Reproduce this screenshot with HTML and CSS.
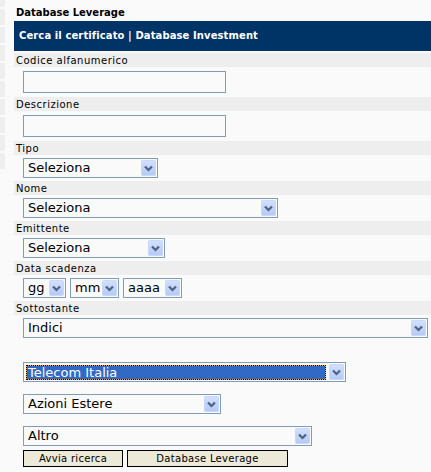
FILE: index.html
```html
<!DOCTYPE html>
<html lang="it">
<head>
  <meta charset="UTF-8">
  <title>Database Leverage</title>
  <link rel="stylesheet" href="styles.css">
</head>
<body>
  <div id="page">
    <div class="edge">
      <span class="first"></span><span></span><span></span><span></span><span></span>
      <span></span><span></span><span></span><span></span><span></span>
    </div>

    <div id="main">
      <h1 id="title">Database Leverage</h1>
      <div id="header">Cerca il certificato | Database Investment</div>

      <div class="label">Codice alfanumerico</div>
      <div class="field"><input class="text" type="text"></div>

      <div class="label">Descrizione</div>
      <div class="field"><input class="text" type="text"></div>

      <div class="label">Tipo</div>
      <div class="field sel">
        <span class="select w-tipo"><select><option>Seleziona</option></select><span class="arrow"><svg width="15" height="16"><use href="#arr"/></svg></span></span>
      </div>

      <div class="label">Nome</div>
      <div class="field sel">
        <span class="select w-nome"><select><option>Seleziona</option></select><span class="arrow"><svg width="15" height="16"><use href="#arr"/></svg></span></span>
      </div>

      <div class="label">Emittente</div>
      <div class="field sel">
        <span class="select w-emit"><select><option>Seleziona</option></select><span class="arrow"><svg width="15" height="16"><use href="#arr"/></svg></span></span>
      </div>

      <div class="label">Data scadenza</div>
      <div class="field sel dates">
        <span class="select w-gg"><select><option>gg</option></select><span class="arrow"><svg width="15" height="16"><use href="#arr"/></svg></span></span>
        <span class="select w-mm"><select><option>mm</option></select><span class="arrow"><svg width="15" height="16"><use href="#arr"/></svg></span></span>
        <span class="select w-aaaa"><select><option>aaaa</option></select><span class="arrow"><svg width="15" height="16"><use href="#arr"/></svg></span></span>
      </div>

      <div class="label">Sottostante</div>
      <div class="field sel">
        <span class="select w-indici"><select><option>Indici</option></select><span class="arrow"><svg width="15" height="16"><use href="#arr"/></svg></span></span>
      </div>

      <div class="more">
        <span class="select w-telecom"><select class="focused"><option>Telecom Italia</option></select><span class="arrow"><svg width="15" height="16"><use href="#arr"/></svg></span></span>
        <span class="select w-azioni"><select><option>Azioni Estere</option></select><span class="arrow"><svg width="15" height="16"><use href="#arr"/></svg></span></span>
        <span class="select w-altro"><select><option>Altro</option></select><span class="arrow"><svg width="15" height="16"><use href="#arr"/></svg></span></span>
      </div>

      <div class="buttons">
        <button class="btn w-avvia">Avvia ricerca</button>
        <button class="btn w-db">Database Leverage</button>
      </div>
    </div>
  </div>

  <svg width="0" height="0" class="defs">
    <defs>
      <linearGradient id="g" x1="0" y1="0" x2="0" y2="1">
        <stop offset="0" stop-color="#d3e0fd"/>
        <stop offset="1" stop-color="#b4c9f5"/>
      </linearGradient>
      <symbol id="arr" viewBox="0 0 15 16">
        <rect x="0.5" y="0.5" width="14" height="15" rx="1" fill="url(#g)" stroke="#c8d8fb"/>
        <path d="M4 6.5 L7.5 10 L11 6.5" fill="none" stroke="#4d6185" stroke-width="2.2"/>
      </symbol>
    </defs>
  </svg>
</body>
</html>
```

FILE: styles.css
```css
body {
  margin: 0;
  background-color: #fafafa;
  font-family: "DejaVu Sans", Verdana, sans-serif;
  color: #000;
}

#page {
  display: flex;
}

.edge {
  width: 5px;
  margin-right: 9px;
  display: flex;
  flex-direction: column;
  gap: 2px;
}

.edge span {
  height: 16px;
  background-color: #eeeeee;
}

.edge span.first {
  height: 7px;
}

#main {
  flex: 1;
}

#title {
  margin: 0;
  padding: 7px 0 2px 2px;
  font-size: 10px;
  line-height: 12px;
  font-weight: bold;
}

#header {
  height: 30px;
  line-height: 30px;
  padding-left: 5px;
  background-color: #003366;
  color: white;
  font-size: 10px;
  font-weight: bold;
  letter-spacing: 0.1px;
  margin-bottom: 2px;
}

.label {
  height: 14px;
  line-height: 15px;
  padding-left: 2px;
  background-color: #eeeeee;
  font-size: 10px;
  letter-spacing: 0.5px;
}

.field {
  padding: 4px 0 4px 9px;
}

.field.sel {
  padding: 3px 0 3px 9px;
}

.text {
  display: block;
  box-sizing: border-box;
  width: 203px;
  height: 22px;
  margin: 0;
  border: 1px solid #7f9db9;
  background-color: #fafafa;
}

/* select box with the xp style arrow */
.select {
  box-sizing: border-box;
  display: flex;
  align-items: center;
  height: 20px;
  padding: 1px;
  border: 1px solid #7f9db9;
  background-color: #fafafa;
}

.select select {
  appearance: none;
  -webkit-appearance: none;
  flex: 1;
  min-width: 0;
  height: 16px;
  margin: 0;
  padding: 0 0 0 3px;
  border: none;
  background: transparent;
  font-family: "DejaVu Sans", Verdana, sans-serif;
  font-size: 13px;
  line-height: 16px;
  color: #000;
}

.select select.focused {
  height: 15px;
  margin: 0 3px 0 1px;
  padding-left: 1px;
  border: 1px dotted #000;
  background: linear-gradient(#316ac5, #316ac5) padding-box, linear-gradient(#e9a63a, #e9a63a) border-box;
  color: white;
  line-height: 13px;
}

.arrow {
  display: flex;
  width: 15px;
  height: 16px;
}

.dates {
  display: flex;
  gap: 4px;
}

.w-tipo { width: 135px; }
.w-nome { width: 255px; }
.w-emit { width: 142px; }
.w-gg { width: 43px; }
.w-mm { width: 49px; }
.w-aaaa { width: 59px; }
.w-indici { width: 405px; }
.w-telecom { width: 323px; }
.w-azioni { width: 198px; }
.w-altro { width: 289px; }

.more {
  display: flex;
  flex-direction: column;
  align-items: flex-start;
  gap: 12px;
  padding: 21px 0 0 9px;
}

.buttons {
  display: flex;
  gap: 4px;
  padding: 4px 0 0 9px;
}

.btn {
  box-sizing: border-box;
  height: 17px;
  margin: 0;
  padding: 0;
  border: 1px solid #000;
  background-color: #ece9d8;
  font-family: "DejaVu Sans", Verdana, sans-serif;
  font-size: 10px;
  line-height: 14px;
  color: #000;
  letter-spacing: 0.3px;
}

.w-avvia { width: 100px; }
.w-db { width: 161px; }

.defs {
  position: absolute;
}
```
